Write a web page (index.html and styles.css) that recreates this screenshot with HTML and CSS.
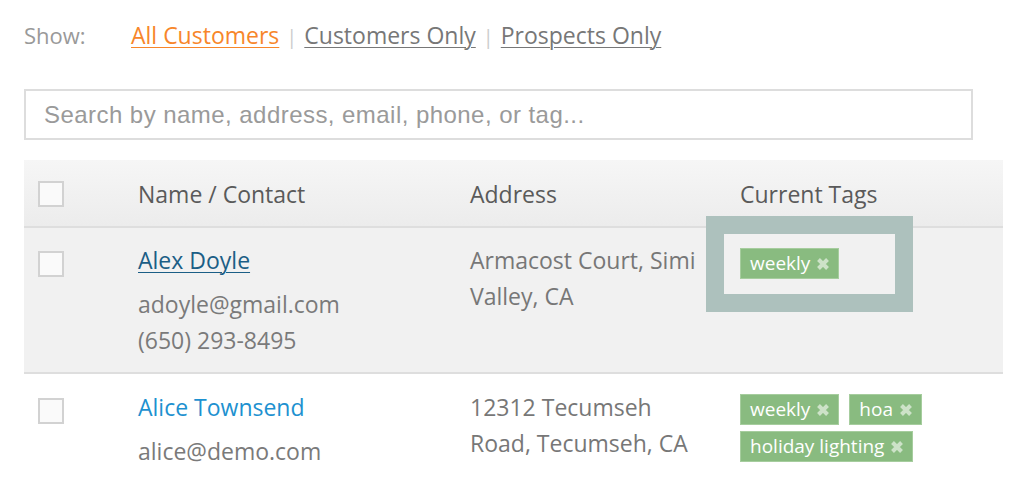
FILE: index.html
```html
<!DOCTYPE html>
<html>
<head>
<meta charset="utf-8">
<link rel="stylesheet" href="styles.css">
</head>
<body>
<div class="page">
  <div class="filter">
    <span class="show-label">Show:</span>
    <a class="flink active" href="#">All Customers</a>
    <span class="sep">|</span>
    <a class="flink" href="#">Customers Only</a>
    <span class="sep">|</span>
    <a class="flink" href="#">Prospects Only</a>
  </div>
  <div class="search">Search by name, address, email, phone, or tag...</div>
  <div class="table">
    <div class="row head">
      <div class="cbcell"><span class="cb"></span></div>
      <div class="cell">Name / Contact</div>
      <div class="cell">Address</div>
      <div class="cell">Current Tags</div>
    </div>
    <div class="row r1">
      <div class="cbcell"><span class="cb"></span></div>
      <div class="cell name">
        <a class="cname dark" href="#">Alex Doyle</a>
        <div class="line">adoyle@gmail.com</div>
        <div class="line">(650) 293-8495</div>
      </div>
      <div class="cell addr">Armacost Court, Simi<br>Valley, CA</div>
      <div class="cell tags">
        <span class="tag">weekly<svg class="x" viewBox="0 0 14 14"><path d="M2.5 2.5L11.5 11.5M11.5 2.5L2.5 11.5"/></svg></span>
        <div class="hl"></div>
      </div>
    </div>
    <div class="row r2">
      <div class="cbcell"><span class="cb"></span></div>
      <div class="cell name">
        <a class="cname light" href="#">Alice Townsend</a>
        <div class="line">alice@demo.com</div>
      </div>
      <div class="cell addr">12312 Tecumseh<br>Road, Tecumseh, CA</div>
      <div class="cell tags">
        <span class="tag">weekly<svg class="x" viewBox="0 0 14 14"><path d="M2.5 2.5L11.5 11.5M11.5 2.5L2.5 11.5"/></svg></span>
        <span class="tag">hoa<svg class="x" viewBox="0 0 14 14"><path d="M2.5 2.5L11.5 11.5M11.5 2.5L2.5 11.5"/></svg></span>
        <span class="tag">holiday lighting<svg class="x" viewBox="0 0 14 14"><path d="M2.5 2.5L11.5 11.5M11.5 2.5L2.5 11.5"/></svg></span>
      </div>
    </div>
  </div>
</div>
</body>
</html>
```
FILE: styles.css
```css
html, body {
  margin: 0;
  padding: 0;
  background: #fff;
}
.page {
  width: 1024px;
  height: 480px;
  overflow: hidden;
  padding: 0 0 0 24px;
  box-sizing: border-box;
  font-family: "Open Sans", sans-serif;
}
.filter {
  display: flex;
  align-items: baseline;
  height: 36px;
  padding-top: 17px;
  font-size: 23px;
  line-height: 36px;
}
.show-label {
  color: #999;
  width: 107px;
  font-size: 22px;
}
.flink {
  color: #777;
  text-decoration: underline;
  text-underline-offset: 3px;
  text-decoration-thickness: 1px;
}
.flink.active {
  color: #f7862a;
}
.sep {
  color: #ccc;
  margin: 0 7px;
  font-size: 20px;
}
.search {
  margin-top: 36px;
  width: 949px;
  height: 51px;
  box-sizing: border-box;
  border: 2px solid #ddd;
  padding-left: 18px;
  font-family: "Liberation Sans", Arial, sans-serif;
  font-size: 24px;
  letter-spacing: 0.45px;
  line-height: 47px;
  color: #9a9a9a;
}
.table {
  margin-top: 20px;
  width: 979px;
}
.row {
  display: grid;
  grid-template-columns: 114px 332px 270px 1fr;
}
.head {
  height: 66px;
  background: linear-gradient(#f6f6f6, #ececec);
  border-bottom: 2px solid #dedede;
  align-items: center;
}
.head .cell {
  font-size: 23px;
  color: #5a5a5a;
}
.head .cbcell, .head .cell {
  padding-top: 2px;
}
.cbcell {
  padding-left: 14px;
}
.cb {
  display: block;
  width: 26px;
  height: 26px;
  box-sizing: border-box;
  border: 2px solid #d2d2d2;
  background: #fafafa;
}
.r1 {
  background: #f1f1f1;
  border-bottom: 2px solid #dedede;
  height: 144px;
}
.r1 .cbcell {
  padding-top: 23px;
}
.r2 .cbcell {
  padding-top: 24px;
}
.cell {
  font-size: 23px;
  color: #777;
  line-height: 36px;
}
.r1 .cell {
  padding-top: 14px;
}
.r2 .cell {
  padding-top: 15px;
}
.cname {
  display: block;
  font-size: 23px;
  line-height: 36px;
  margin-bottom: 8px;
  text-decoration: none;
}
.cname.dark {
  color: #1b5e86;
  text-decoration: underline;
  text-underline-offset: 3px;
  text-decoration-thickness: 1px;
}
.cname.light {
  color: #1d91d0;
}
.line {
  font-size: 23px;
  line-height: 36px;
  color: #7a7a7a;
}
.addr {
  color: #777;
}
.cell.tags {
  position: relative;
  display: flex;
  flex-wrap: wrap;
  align-content: flex-start;
  gap: 6px 10px;
  padding-top: 20px;
}
.tag {
  display: inline-flex;
  align-items: center;
  background: #89bb80;
  border: 1px solid #a6cd9e;
  color: #fff;
  font-size: 19px;
  line-height: 29px;
  height: 31px;
  box-sizing: border-box;
  padding: 0 8px 0 9px;
}
.x {
  width: 14px;
  height: 14px;
  margin-left: 6px;
  margin-top: 1px;
  fill: none;
  stroke: #cde2c8;
  stroke-width: 4;
}
.hl {
  position: absolute;
  left: -34px;
  top: -12px;
  width: 207px;
  height: 96px;
  box-sizing: border-box;
  border: 18px solid #adc1bd;
}
```
